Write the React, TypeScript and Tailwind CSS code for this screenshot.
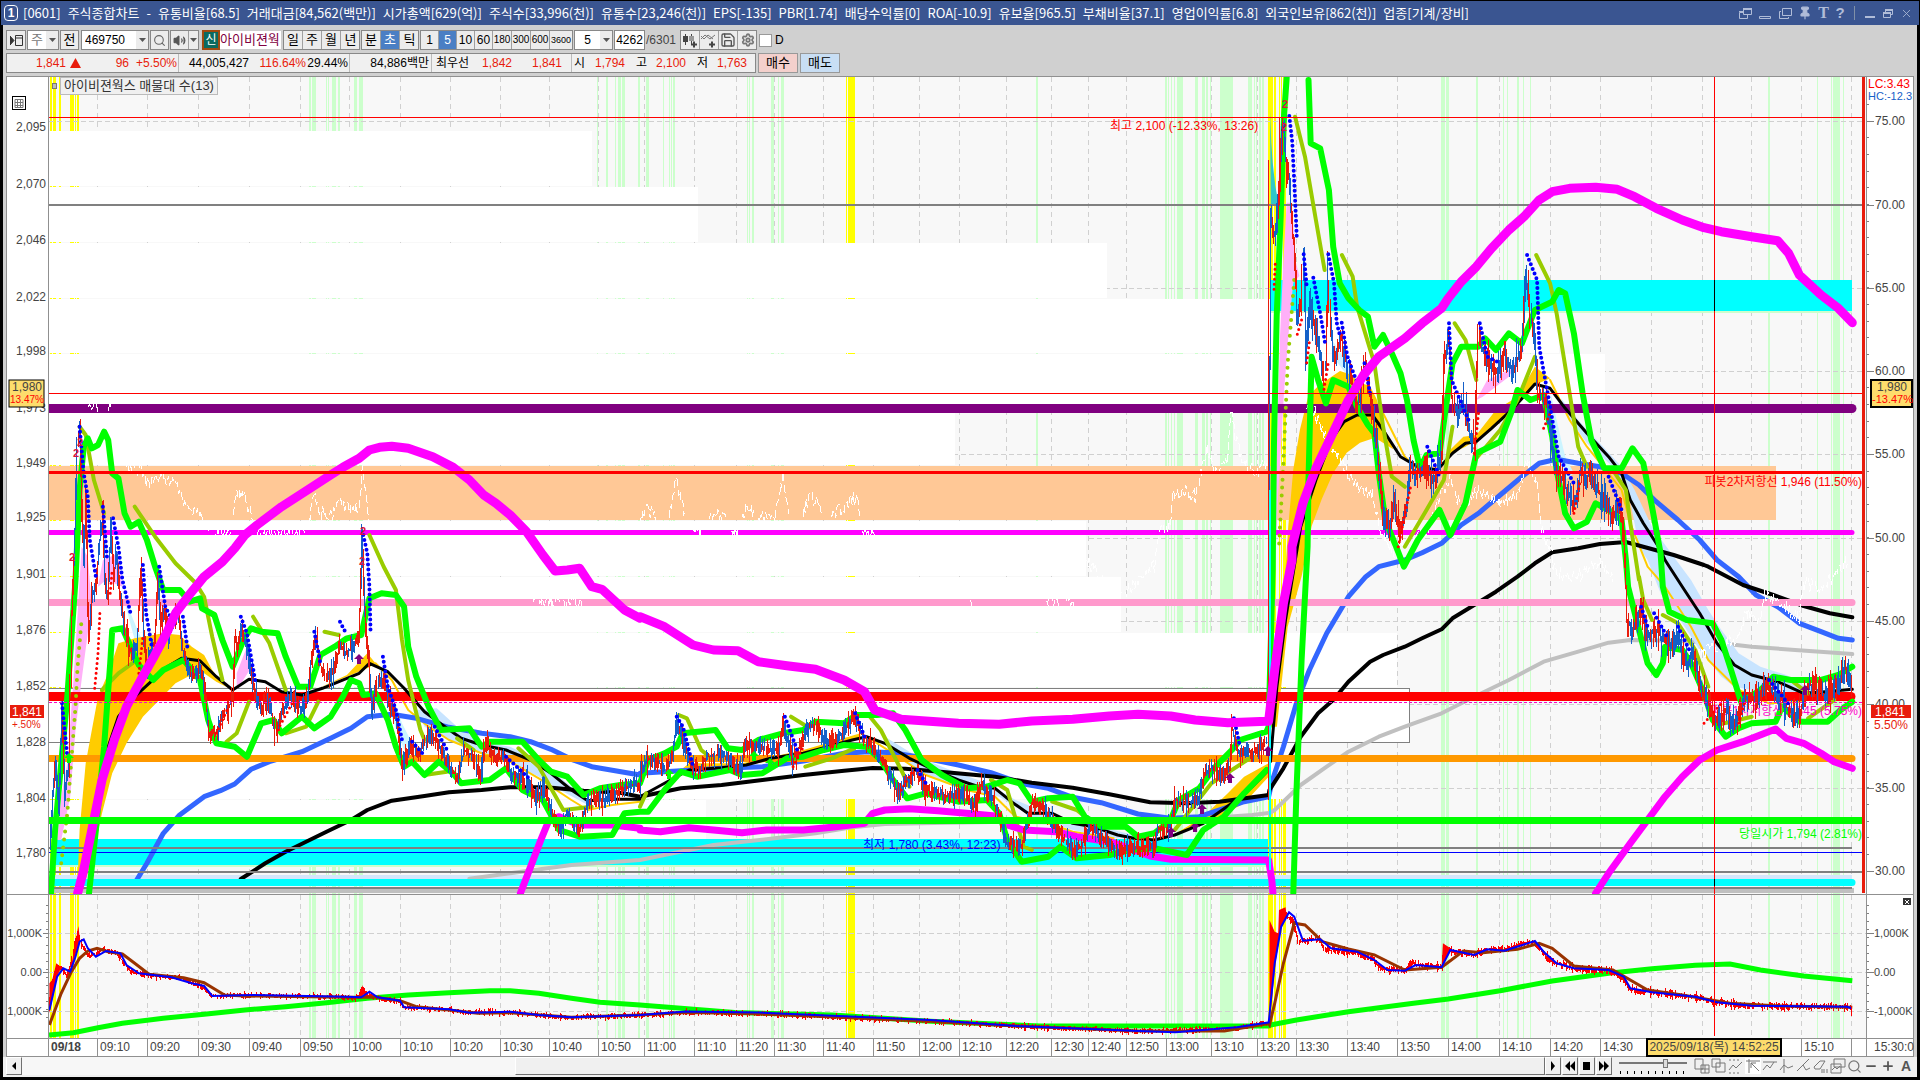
import React from "react";
import { Search, Volume2, Save, Settings, Minus, Plus, Pin, X } from "lucide-react";

/* ---------- chart geometry ---------- */

type Pt = [number, number];

// Series are digitised per tile; each tile has its own origin and scale.
const TILES: Record<string, [number, number, number, number]> = {
  A: [0, 380, 2.45, 3],
  B: [640, 400, 2.45, 3],
  C: [1240, 80, 2.306, 3],
  D: [1240, 560, 2.306, 3],
  E: [0, 880, 2.45, 3],
  F: [1240, 880, 2.306, 3],
  G: [0, 0, 0.8167, 0.8167],
  H: [1260, 76, 3, 3],
};

function points(src: string): Pt[] {
  let tile = TILES.A;
  const out: Pt[] = [];
  for (const tok of src.trim().split(/\s+/)) {
    if (TILES[tok]) {
      tile = TILES[tok];
      continue;
    }
    const [x, y] = tok.split(",").map(Number);
    out.push([tile[0] + x / tile[2], tile[1] + y / tile[3]]);
  }
  return out;
}

// Several strokes may be joined in one string with ";"
function toPath(src: string): string {
  return src
    .split(";")
    .map((s) => "M" + points(s).map((p) => p[0].toFixed(1) + " " + p[1].toFixed(1)).join("L"))
    .join("");
}

function random(seed: number) {
  let s = seed;
  return () => {
    s = (s * 16807) % 2147483647;
    return s / 2147483647;
  };
}

// High-low bars along a price line. Now and then a bar gets a long wick.
function candles(src: string, amp: number, seed: number) {
  const rnd = random(seed);
  let red = "";
  let blue = "";
  let up = true;
  const pts = points(src);
  for (let i = 1; i < pts.length; i++) {
    const [x0, y0] = pts[i - 1];
    const [x1, y1] = pts[i];
    const n = Math.max(1, Math.round(x1 - x0));
    for (let k = 0; k < n; k++) {
      const t = k / n;
      const t2 = (k + 1) / n;
      const ya = y0 + (y1 - y0) * t;
      const yb = y0 + (y1 - y0) * t2;
      const x = Math.round(x0 + (x1 - x0) * t) + 0.5;
      const wick = rnd() > 0.8 ? 1.5 : 1;
      const top = Math.min(ya, yb) - rnd() * amp * wick;
      const bottom = Math.max(ya, yb) + rnd() * amp * wick;
      const mid = top + (bottom - top) * rnd();
      if (rnd() > 0.6) up = !up;
      if (up) {
        red += `M${x} ${top.toFixed(1)}V${bottom.toFixed(1)}`;
      } else {
        blue += `M${x} ${top.toFixed(1)}V${mid.toFixed(1)}`;
        blue += `M${x} ${mid.toFixed(1)}V${bottom.toFixed(1)}`;
      }
    }
  }
  return { red, blue };
}

function jagged(src: string, amp: number, seed: number) {
  const rnd = random(seed);
  return src
    .split(";")
    .map((s) => {
      const pts = points(s);
      let d = `M${pts[0][0].toFixed(1)} ${pts[0][1].toFixed(1)}`;
      for (let i = 1; i < pts.length; i++) {
        const [x0, y0] = pts[i - 1];
        const [x1, y1] = pts[i];
        const n = Math.max(1, Math.round(x1 - x0));
        for (let k = 1; k <= n; k++) {
          const t = k / n;
          d += `L${(x0 + (x1 - x0) * t).toFixed(1)} ${(y0 + (y1 - y0) * t + (rnd() - 0.5) * amp).toFixed(1)}`;
        }
      }
      return d;
    })
    .join("");
}

const GREEN_BANDS: Pt[] = [
  [309, 2], [312, 4], [326, 1], [328, 1], [332, 4], [338, 2], [354, 3], [359, 4], [597, 1], [606, 2], [615, 1],
  [618, 3], [622, 3], [638, 2], [646, 3], [663, 1], [669, 1], [671, 1], [673, 2], [747, 1], [749, 1], [752, 2],
  [771, 3], [778, 1], [781, 3], [1036, 2], [1165, 2], [1168, 1], [1171, 1], [1174, 1], [1177, 6], [1195, 3],
  [1202, 3], [1206, 2], [1210, 1], [1220, 13], [1248, 4], [1254, 1], [1256, 1], [1259, 2], [1262, 2], [1441, 4],
  [1446, 3], [1476, 2], [1503, 1], [1507, 1], [1517, 2], [1523, 1], [1530, 1], [1768, 2], [1817, 1], [1831, 1],
  [1833, 7], [1843, 1],
];
const YELLOW_BANDS: Pt[] = [
  [50, 2], [53, 3], [59, 2], [70, 4], [75, 1], [77, 2], [846, 1], [848, 7], [1268, 5], [1274, 2], [1279, 1],
  [1281, 1], [1283, 3],
];
const GRID_X = [
  97, 147, 198, 249, 300, 349, 400, 450, 500, 549, 598, 644, 694, 736, 774, 823, 873, 919, 959, 1006, 1051, 1088,
  1126, 1166, 1211, 1257, 1296, 1347, 1397, 1448, 1499, 1550, 1600, 1651, 1702, 1751, 1801, 1851,
];
const GRID_Y = [121, 205, 288, 371, 454, 538, 621, 704, 788, 871];
const PROFILE: [number, number, number][] = [
  [131, 55, 592], [187, 55, 698], [243, 55, 1107], [299, 54, 1559], [354, 54, 1605], [409, 56, 955],
  [521, 55, 1086], [577, 55, 1121], [633, 54, 1397], [688, 54, 1410], [743, 56, 1290], [800, 39, 706],
];

const PRICE_LEFT =
  "A 122,1400 130,1250 138,1150 145,1300 152,980 160,1250 170,1150 176,700 184,450 190,200 195,140 200,380 205,540 210,350 214,600 218,780 225,650 235,620 245,480 252,400 258,600 265,650 272,430 280,600 285,520 295,640 305,720 315,810 325,820 335,800 345,570 352,760 360,870 372,800 380,790 388,590 395,740 405,700 415,760 425,730 436,700 445,800 455,850 465,880 480,880 495,870 505,950 512,1060 530,1060 545,1020 560,980 570,960 575,780 583,790 590,740 600,780 612,850 625,930 640,980 660,960 675,1050 690,1000 710,950 740,990 755,940 765,820 775,770 785,850 800,900 820,870 833,790 845,820 865,800 880,770 885,600 888,460 895,700 905,850 912,1000 925,900 940,900 955,960 975,1040 988,1170 1005,1090 1030,1120 1050,1060 1070,1080 1090,1140 1120,1190 1140,1110 1160,1130 1175,1190 1190,1090 1215,1140 1235,1130 1255,1180 1290,1200 1310,1260 1330,1220 1350,1290 1372,1350 1390,1300 1420,1350 1440,1260 1480,1260 1520,1230 1568,1210 B 0,1120 20,1080 40,1080 60,1100 78,1080 90,960 105,1020 120,1080 145,1110 165,1070 200,1060 225,1090 250,1110 255,1040 290,1040 340,1050 350,970 375,1080 400,1020 415,970 440,1000 465,1030 500,995 525,950 545,1000 570,1040 600,1100 635,1180 660,1130 680,1120 700,1170 750,1185 800,1185 820,1220 838,1150 860,1190 880,1240 900,1330 935,1340 960,1210 985,1220 1005,1250 1030,1300 1060,1350 1080,1340 1105,1280 1130,1310 1160,1350 1200,1345 1260,1340 1270,1290 1300,1280 1310,1200 1350,1210 1370,1190 1385,1120 1405,1100 1425,1135 1445,1100 1450,980 1465,1060 1500,1055 1520,1050 1535,1020";
const PRICE_RIGHT =
  "H 28,1300 33,420 40,480 48,460 56,360 62,210 72,150 78,250 88,300 96,440 104,540 112,740 124,680 131,550 138,820 150,680 158,740 175,780 190,900 197,860 202,560 212,760 222,850 244,780 C 255,900 270,980 280,950 288,860 300,930 315,1100 330,1300 345,1350 355,1250 368,1370 380,1300 395,1160 410,1180 430,1160 450,1200 465,1120 470,850 482,760 490,950 500,1000 515,970 530,1060 542,1100 550,760 565,830 590,880 610,820 630,880 650,800 660,580 670,700 680,780 688,950 705,960 715,1050 725,1150 745,1200 770,1280 785,1180 810,1190 830,1240 860,1310 878,1280 888,1430 D 893,180 905,210 925,160 940,230 960,210 990,260 1010,220 1030,310 1045,270 1065,400 1080,430 1100,480 1120,450 1145,490 1165,410 1190,410 1215,370 1240,400 1265,450 1290,470 1310,370 1330,390 1355,410 1380,370 1395,320 1410,370";

const S = {
  bigMagenta:
    "A 190,1540 205,1470 225,1350 250,1200 280,1080 310,980 345,900 375,835 410,755 430,700 460,650 500,590 545,545 575,505 600,465 630,435 690,380 760,325 810,285 840,262 880,235 905,210 930,202 960,199 1000,205 1060,230 1110,262 1150,300 1185,345 1215,370 1250,405 1290,455 1330,525 1360,573 1390,570 1420,565 1450,620 1475,628 1530,690 1568,715 B 0,650 60,680 130,735 180,750 240,752 290,785 360,797 430,808 500,840 550,875 575,930 640,958 700,963 780,970 880,973 960,963 1060,958 1150,948 1220,943 1300,948 1360,960 1440,968 1535,964 D 66,484 80,330 100,130 120,0 C 120,1400 145,1270 175,1165 210,1070 250,960 285,885 320,830 380,775 420,730 465,685 480,655 510,605 545,560 580,505 620,450 655,410 690,360 720,335 760,325 820,322 870,328 910,350 960,385 1020,420 1070,443 1110,455 1180,470 1240,482 1265,520 1290,585 1340,645 1380,685 1412,728",
  lowMagenta:
    "A 1275,1540 1300,1460 1325,1380 1345,1320 1370,1310 1420,1335 1500,1335 1568,1345 B 0,1290 50,1295 120,1283 180,1290 250,1298 310,1290 400,1290 470,1282 550,1270 570,1240 600,1230 660,1226 730,1232 800,1240 870,1248 900,1275 940,1290 1020,1295 1070,1310 1150,1325 1200,1345 1250,1368 1300,1378 1540,1380 1548,1440 1552,1500; D 820,1000 850,940 900,850 940,780 980,710 1020,650 1060,600 1100,570 1160,545 1210,520 1235,507 1260,535 1300,550 1340,580 1370,605 1412,625",
  blue:
    "A 335,1500 360,1450 400,1360 440,1305 500,1250 540,1232 575,1212 615,1168 660,1145 740,1115 810,1075 860,1045 900,1010 960,1003 1020,1015 1100,1042 1180,1060 1250,1070 1300,1085 1350,1108 1400,1138 1450,1160 1568,1185 B 0,1120 100,1112 200,1105 300,1100 400,1083 500,1060 560,1055 620,1058 700,1075 780,1095 860,1118 940,1152 1000,1165 1060,1192 1130,1208 1220,1242 1300,1255 1370,1250 1420,1230 1480,1205 1540,1190 D 75,660 100,560 130,430 160,330 200,220 250,110 290,50 320,20 380,0 C 420,1418 465,1390 510,1335 550,1300 600,1245 650,1190 690,1150 730,1138 780,1150 830,1160 880,1180 920,1215 960,1265 1010,1320 1060,1380 1100,1440 D 1150,50 1190,105 1240,140 1290,190 1340,215 1380,235 1412,240",
  black:
    "A 590,1497 650,1450 700,1415 750,1385 800,1355 860,1320 900,1290 960,1262 1040,1248 1100,1237 1180,1230 1250,1222 1340,1222 1430,1232 1520,1238 B 0,1190 100,1165 200,1155 300,1140 400,1125 500,1112 570,1104 650,1106 750,1117 870,1130 960,1148 1060,1163 1150,1183 1250,1207 1340,1210 1420,1205 1540,1185 D 68,690 100,625 140,530 180,460 215,420 250,365 300,305 330,285 380,260 420,235 465,208 490,175 540,135 590,95 640,50 C 680,1450 720,1417 780,1405 830,1392 890,1386 930,1400 1000,1425 1070,1455 D 1080,20 1160,75 1230,105 1300,138 1360,160 1412,172",
  gray:
    "A 1150,1496 1250,1480 1400,1455 1568,1440 B 0,1380 80,1360 180,1335 330,1315 430,1300 520,1282 600,1272 750,1268 900,1265 1100,1270 1300,1262 1500,1245 1545,1238 D 80,750 140,675 200,620 250,575 320,530 380,500 465,460 540,410 620,360 700,305 780,275 850,248 900,240 1000,242 1100,248 1180,260 1280,270 1412,282",
  thinBlack:
    "A 225,1350 240,1240 265,1100 290,1010 330,950 370,905 410,860 445,835 490,842 530,890 570,930 610,898 650,905 690,935 740,945 790,925 850,895 880,880 905,850 950,875 990,925 1040,995 1090,1040 1130,1075 1180,1095 1240,1110 1300,1140 1350,1180 1400,1230 1440,1262 1500,1258 1568,1258 B 0,1190 60,1150 120,1110 200,1103 260,1095 320,1075 400,1060 460,1040 520,1020 555,1010 600,1030 660,1075 720,1110 780,1140 830,1160 870,1165 910,1205 950,1240 1010,1240 1060,1270 1110,1280 1170,1305 1210,1315 1260,1320 1310,1305 1380,1270 1450,1210 1500,1160 1540,1110; D 70,605 85,380 105,180 125,20 C 140,1340 175,1200 210,1080 240,1025 270,1005 305,1005 330,1050 370,1130 410,1160 455,1170 490,1120 520,1090 545,1085 580,1045 630,985 680,912 715,925 750,985 800,1060 850,1130 880,1180 900,1260 930,1330 970,1410 D 980,0 1020,80 1060,160 1100,250 1140,315 1180,345 1240,365 1300,400 1350,395 1412,388",
  upGreen:
    "A 125,1540 135,1350 150,1150 165,950 185,600 195,330 205,200 215,175 225,205 240,195 255,155 265,180 275,280 290,295 305,400 320,440 340,425 360,480 380,560 400,630 440,630 465,665 490,655 495,685 525,705 545,780 570,860 600,770 615,745 640,755 680,760 700,830 730,920 760,920 785,825 820,800 850,775 885,765 905,655 935,640 970,645 990,680 1000,800 1020,890 1050,980 1080,1050 1150,1045 1180,1100 1200,1085 1280,1085 1320,1140 1350,1175 1390,1190 1430,1245 1470,1225 1520,1215 1568,1210 B 20,1080 60,1060 90,1040 105,1000 185,990 215,1045 250,1050 290,1020 350,1000 400,990 430,965 500,970 530,945 580,945 620,940 650,990 690,1080 740,1125 800,1165 850,1160 900,1140 930,1150 960,1205 1000,1195 1060,1190 1090,1250 1130,1280 1190,1280 1220,1310 1260,1300 1300,1260 1320,1200 1370,1165 1410,1100 1450,1050 1470,1020 1535,995 D 66,500 H 38,1480 42,1100 50,720 62,420 72,120 80,5; C 158,0 163,190 185,205 205,330 215,500 230,610 250,655 275,690 295,710 310,800 330,765 350,820 370,880 385,960 400,1080 415,1165 430,1125 460,1120 475,980 490,850 510,800 550,800 565,775 590,810 620,760 650,790 680,690 720,665 735,630 750,640 770,760 790,940 810,1080 840,1165 880,1165 905,1105 930,1150 950,1280 970,1420 D 975,80 990,155 1030,180 1090,190 1110,240 1130,320 1155,425 1200,390 1230,350 1270,360 1340,360 1380,345 1412,320",
  lowGreen:
    "A 218,1540 235,1350 255,1100 270,850 275,750 300,745 340,855 375,900 400,870 450,840 490,900 510,1020 530,1090 575,1100 605,1130 640,1030 670,1020 690,1060 740,1010 770,1045 810,1010 840,950 860,900 880,910 890,945 920,940 950,1020 970,1100 990,1160 1010,1145 1040,1185 1075,1145 1110,1180 1130,1210 1200,1200 1240,1165 1280,1230 1330,1260 1370,1350 1420,1370 1500,1365 1530,1300 B 0,1235 20,1235 60,1170 100,1115 140,1130 220,1110 250,1125 300,1120 360,1075 400,1070 450,1050 500,1035 555,1040 590,1080 620,1140 655,1195 700,1180 780,1205 850,1200 880,1240 900,1320 935,1385 1000,1370 1030,1340 1070,1375 1150,1365 1200,1350 1260,1345 1340,1365 1380,1290 1430,1250 1480,1180 1535,1110; D 123,1000 130,700 142,300 C 156,1400 158,1200 165,830 180,900 198,970 215,900 250,920 270,980 295,1035 310,1060 320,1180 335,1320 360,1400 378,1460 410,1380 460,1290 485,1365 520,1270 545,1120 600,1085 625,1000 640,930 670,960 700,945 720,1070 730,1170 750,1300 770,1345 800,1325 820,1270 850,1290 880,1320 890,1440 D 895,80 920,210 940,310 960,345 975,310 980,260 1020,270 1040,310 1070,400 1090,480 1120,530 1150,505 1180,490 1235,485 1250,440 1290,485 1355,485 1385,450 1412,425",
  olive:
    "A 195,140 210,165 230,300 255,400; A 330,380 380,470 430,550 480,610 500,650 520,770 545,900; A 620,710 660,790 700,930; A 905,465 940,560 970,630 985,780 1000,900 1030,1050 1040,1080; A 250,930 290,880 330,845; A 795,755 830,765; A 555,1085 580,1060 610,965; A 700,1060 750,1040 780,965; A 1040,1185 1095,1175; A 1120,1075 1160,1110; A 1270,1105 1320,1160 1380,1290 1450,1280; B 95,945 115,955 150,1050 175,1075; B 0,1220 15,1180; B 370,950 410,980; B 405,1100 470,1075 525,1045; B 560,945 590,990 640,1110 660,1160; B 860,1140 900,1170 940,1340 960,1350; B 1010,1205 1070,1230 1100,1260; B 1310,1290 1400,1150 1500,1070; C 127,110 150,230 175,420 195,570; C 235,525 260,590 270,680 310,850 330,1040 350,1190 380,1220; C 495,730 520,780 545,900; C 683,525 715,610 730,700 760,940 780,1100 800,1160; C 380,1400 430,1290 470,1200 490,1040; C 545,1135 600,1050 640,960 680,830; C 860,1170 890,1230 900,1330 920,1500; D 920,50 930,120 950,180; D 975,165 1010,190 1050,270 1080,380; D 1100,495 1180,470; D 1270,360 1310,400; D 1310,475 1370,420",
  oliveDots: "C 125,600 110,850 100,1150 90,1400; A 150,1450 165,1300 185,980 190,860 200,720",
  blueDots:
    "A 195,140 205,280 215,350 220,480 235,590; A 252,380 262,530; A 277,415 290,500 300,600 320,700; A 350,555 358,700 372,800; A 390,560 405,680 430,740; A 448,710 460,810; A 590,710 605,760 625,900; A 770,755 785,850; A 833,725 850,765; A 890,465 900,520 905,620 908,760; A 938,830 950,920 970,990 985,1080; A 152,970 165,1130; A 1010,1085 1035,1120; A 1065,1040 1095,1110; A 1240,1130 1300,1200; B 90,950 105,980 130,1100; B 355,950 385,1050; B 527,940 550,1010; B 680,1110 705,1160; B 1455,955 1470,1040; H 88,120 97,200 103,320 108,430 110,480; H 131,535 140,630; H 160,605 182,720 195,800; H 205,535 222,620 230,740 240,780; H 245,740 262,840 280,890 292,920; C 287,850 300,940; C 432,1100 460,1190; C 482,730 488,900 530,1030; C 553,730 570,830 600,850; C 662,525 685,600 690,800 715,980 735,1130 770,1210; C 850,1190 880,1290; D 925,140 940,200; D 955,160 985,230; D 1010,200 1040,280; D 1220,360 1270,440",
  redDots:
    "A 232,925 240,820 245,690; A 340,880 350,770; A 530,1060 560,980; A 680,1050 720,960; A 270,640 275,570; B 640,1170 670,1110; B 375,1100 400,1040; C 365,1400 395,1210; H 192,940 205,860; H 112,775 128,720; H 42,640 46,560; H 140,860 148,800; C 770,1300 785,1200; C 540,1120 550,1000; C 700,1045 715,1000; D 1070,490 1110,430; D 1150,490 1165,420",
  white:
    "A 310,262 345,270 360,310 400,290 430,310 460,385 490,390 497,415; A 572,405 578,340 600,350 620,415; A 757,415 770,350 785,400 815,410 825,370 860,380 880,380 888,260 900,380 905,430; B 0,355 20,330 40,355; B 72,355 88,230 110,350; B 170,358 195,348 210,356; B 250,350 260,320 280,340; B 290,355 330,350 350,230 365,350; B 400,350 412,290 435,310 445,350; B 470,350 520,295 535,300 540,355; B 1095,480 1130,540 1190,575 1220,540 1260,500 1270,400 1300,380 1305,290 1330,270 1360,290 1375,210 1390,150 1410,220 1440,180 1448,20 1460,120 1480,190 1510,220 1535,190; H 140,1000 165,1010 190,1070 225,1130 255,1180 290,1230 340,1260 360,1360 400,1430 C 430,1350 465,1240 485,1200 510,1290 550,1230 600,1270 640,1240 660,1150 685,1200 695,1350 720,1420 D 720,20 760,60 830,10 860,50; D 1040,290 1100,260 1150,230 1165,160 1200,180 1210,100 1290,170 1300,70 1350,80 1400,0; A 215,75 220,90 235,70 240,92; A 265,92 272,70; A 505,450 512,465 545,455 565,465; A 630,455 660,462 700,455 750,460; B 130,392 150,400; B 225,392 240,400; B 545,392 575,400; A 1305,665 1315,660 1340,670 1375,660 1385,672 1425,660; B 810,600 815,612; B 995,605 1025,600; B 1045,602 1065,606",
  subGreen:
    "E 120,465 180,458 240,443 300,430 400,415 500,403 600,390 700,380 800,368 900,355 1000,345 1100,338 1200,332 1250,332 1320,340 1400,355 1470,367 1568,375 G 600,827 680,829 760,834 850,838 950,838 1036,838 F 70,435 130,420 250,395 400,370 480,357 600,332 720,303 850,280 950,266 1050,256 1130,252 1200,270 1300,288 1412,302",
  subBrown:
    "E 121,435 150,340 175,275 195,235 215,213 238,205 265,215 300,222 330,250 365,283 450,293 500,308 550,345 600,348 850,352 920,352 980,362 1020,380 1100,390 1170,400 1250,398 1400,412 1568,405 G 560,827 620,828 690,831 760,834 830,838 930,842 1000,842 1036,836 F 68,435 80,370 100,250 125,130 150,135 190,185 250,207 310,225 380,270 465,262 515,213 560,218 640,208 690,190 720,205 770,258 860,270 940,330 1020,345 1130,370 1250,378 1412,382",
  subBlue:
    "E 121,390 140,290 155,265 172,275 185,230 195,185 205,178 215,205 235,230 260,213 295,220 310,255 340,280 420,292 470,310 500,318 520,348 620,345 850,350 885,352 905,335 925,352 980,362 990,382 1100,388 1150,398 1250,395 1320,405 1400,412 1568,405 G 560,826 620,827 690,830 760,833 830,838 930,842 960,843 1010,839 1036,835 F 66,430 80,250 95,140 113,97 125,110 145,182 185,178 210,205 270,215 310,240 340,270 380,272 405,255 465,262 485,210 540,225 570,208 610,212 680,183 700,215 730,250 770,265 850,270 885,290 900,325 950,337 1050,350 1100,367 1180,377 1400,380 1410,385",
};

const SUB_RED =
  "E 121,390 126,320 138,265 150,262 165,290 175,250 183,190 192,160 200,195 215,225 235,225 250,208 285,218 300,240 320,275 360,286 440,293 480,312 500,325 520,348 620,346 880,352 887,325 900,345 925,354 980,364 990,382 1100,388 1150,398 1250,396 1320,406 1400,412 1568,405 G 560,827 620,828 690,831 760,834 830,838 930,842 1010,840 1036,835";
const SUB_RED_R =
  "F 105,100 125,130 135,185 150,182 185,178 195,208 270,218 310,240 325,268 380,270 395,250 465,262 470,210 540,225 570,208 610,208 650,190 680,185 700,220 720,245 770,265 850,270 885,300 900,328 950,337 1050,350 1100,367 1180,377 1408,381";

const CLOUDS: [string, string][] = [
  ["#c8e4ff", "A 1020,990 1070,985 1120,1040 1180,1085 1250,1100 1300,1130 1360,1180 1430,1250 1440,1275 1380,1235 1320,1190 1240,1140 1180,1120 1100,1080 1040,1040"],
  ["#c8e4ff", "B 600,1010 680,1070 760,1110 850,1150 920,1200 980,1230 1060,1260 1160,1290 1240,1315 1160,1315 1060,1290 960,1250 880,1190 800,1170 700,1125 620,1060"],
  ["#c8e4ff", "C 740,955 780,1020 830,1090 880,1160 910,1230 950,1340 1000,1430 D 1040,60 1080,150 1110,210 1150,280 1200,320 1260,345 1300,375 1350,385 1300,405 1240,390 1180,390 1140,380 1110,350 1060,270 1020,190 970,100 940,0 C 920,1400 895,1230 860,1160 800,1090 750,1000"],
  ["#ccf4ff", "C 715,930 730,1020 750,1130 770,1180 750,1200 725,1100; A 925,850 950,900 985,1030 1010,1090 990,1110 950,980; H 215,790 260,860 290,920 270,910 225,850; A 300,640 340,760 360,800 330,780"],
  ["#ffb0f8", "A 140,1380 150,1250 165,1150 180,900 190,700 200,500 215,530 225,680 215,760 200,900 185,1050 172,1250 150,1380"],
  ["#ffb0f8", "H 48,1200 60,780 70,560 80,380 95,380 108,560 118,600 100,620 90,720 72,950 55,1250 44,1500 38,1500"],
  ["#ffb0f8", "A 580,880 605,800 612,870 580,930; C 545,960 570,900 620,870 660,800 620,890 560,950; A 240,620 252,540 290,520 300,620 260,600"],
  ["#ffcc00", "A 190,1500 195,1350 210,1150 240,950 265,880 290,790 330,775 400,760 440,765 470,800 500,825 520,870 545,910 570,930 530,905 500,880 460,890 430,910 390,960 350,1010 310,1090 275,1180 250,1300 225,1440 205,1520"],
  ["#ffcc00", "A 780,925 850,885 900,820 920,850 905,862 860,885"],
  ["#ffcc00", "D 72,500 85,250 H 75,1500 85,1350 100,1180 120,1060 145,960 175,930 210,905 240,885 270,895 300,920 330,930 350,970 375,1060 400,1120 345,1085 300,1100 260,1130 220,1190 185,1270 155,1350 125,1500 D 110,200 85,500"],
  ["#ffcc00", "C 480,1115 515,1070 545,1065 590,990 640,950 680,860 715,895 680,915 630,990 580,1050 520,1100 480,1125"],
  ["#ffcc00", "B 1300,1310 1380,1250 1440,1180 1480,1130 1540,1090 1540,1130 1480,1210 1420,1250 1340,1290"],
  ["#ffcc00", "B 60,1150 120,1090 250,1090 400,1050 540,1000 540,1015 400,1065 250,1098 120,1110"],
];

const YELLOW_LINES =
  "A 920,850 960,900 1000,990 1050,1040 1100,1080 1180,1120 1250,1145 1320,1195 1400,1260 1440,1290 1500,1275 1568,1265; B 555,1010 620,1060 700,1125 800,1170 870,1190 920,1250 1000,1270 1060,1295 1160,1315; C 330,1000 380,1130 420,1180; C 715,900 760,1020 800,1100 850,1180 880,1230 900,1330 940,1460 D 980,80 1040,200 1080,300 1150,390 1220,430 1300,425";

const ROUND = { fill: "none", strokeLinejoin: "round" as const, strokeLinecap: "round" as const };

function Bands({ y, h }: { y: number; h: number }) {
  return (
    <g shapeRendering="crispEdges">
      {GRID_X.map((x) => (
        <path key={x} d={`M${x + 0.5} ${y}v${h}`} stroke="#d0d0d0" strokeDasharray="5 4" />
      ))}
      {GREEN_BANDS.map(([x, w]) => (
        <rect key={x} x={x} y={y} width={w} height={h} fill="#ccffcc" />
      ))}
      {YELLOW_BANDS.map(([x, w]) => (
        <rect key={x} x={x} y={y} width={w} height={h} fill="#ffff00" />
      ))}
    </g>
  );
}

function HLine({ y, w, c, x1 = 49, x2 = 1862, dash }: { y: number; w: number; c: string; x1?: number; x2?: number; dash?: string }) {
  return <path d={`M${x1} ${y}H${x2}`} stroke={c} strokeWidth={w} strokeDasharray={dash} />;
}

function Arrow({ x, y, c }: { x: number; y: number; c: string }) {
  return <path d={`M${x} ${y}l5 5h-3v5h-4v-5h-3z`} fill={c} />;
}

const CHART_FONT = "'Liberation Sans', 'Noto Sans CJK KR', sans-serif";

function MainPlot() {
  const a = candles(PRICE_LEFT, 11, 7);
  const b = candles(PRICE_RIGHT, 16, 11);
  return (
    <svg viewBox="49 77 1817 817" preserveAspectRatio="none" className="block h-full w-full bg-[#f8f8f8]">
      <Bands y={77} h={817} />
      <g shapeRendering="crispEdges">
        {GRID_Y.map((y) => (
          <HLine key={y} y={y + 0.5} w={1} c="#d0d0d0" dash="5 3" />
        ))}
        {PROFILE.map(([y, h, x]) => (
          <rect key={y} x={49} y={y} width={x - 49} height={h} fill="#ffffff" />
        ))}
        <rect x={49} y={466} width={1727} height={54} fill="#ffc896" />
        <path d="M49 688.5H1409.5V742.5H49" fill="none" stroke="#808080" />
        <rect x={53} y={839} width={1215} height={26} fill="#00ffff" />
        <rect x={53} y={865} width={1215} height={2} fill="#ccffcc" />
        <rect x={49} y={875} width={1803} height={4} fill="#d4e6fb" />
        <rect x={1271} y={280} width={581} height={31} fill="#00ffff" />
        <rect x={1271} y={311} width={581} height={2} fill="#ccffcc" />
      </g>
      <path d={toPath(S.gray)} {...ROUND} stroke="#c0c0c0" strokeWidth={4} />
      <path d={toPath("H 30,100 34,200 38,260 46,330 56,385 32,385")} fill="#30c8c8" />
      {CLOUDS.map(([c, d], i) => (
        <path key={i} d={toPath(d)} fill={c} />
      ))}
      <path d={toPath(YELLOW_LINES)} {...ROUND} stroke="#ffcc00" strokeWidth={2} />
      <path d={toPath(S.blue)} {...ROUND} stroke="#3366ff" strokeWidth={5} />
      <path d={toPath(S.black)} {...ROUND} stroke="#000000" strokeWidth={4} />
      <g shapeRendering="crispEdges">
        <HLine y={204.5} w={2} c="#808080" />
        <HLine y={871.5} w={2} c="#808080" />
        <HLine y={848} w={2} c="#808080" x2={1852} />
        <HLine y={852.5} w={1} c="#0000ff" />
        <rect x={49} y={888} width={1805} height={5} fill="#c0c0c0" />
        <HLine y={887.5} w={2} c="#808080" x2={1852} />
      </g>
      <g strokeLinecap="round">
        <HLine y={408.5} w={9} c="#800080" x2={1852} />
        <HLine y={532.5} w={5} c="#ff00ff" x2={1852} />
        <HLine y={602.5} w={7} c="#ff99cc" x2={1852} />
        <HLine y={696.5} w={9} c="#ff0000" x2={1851} />
        <HLine y={758.5} w={7} c="#ff9900" x2={1852} />
        <HLine y={882.5} w={7} c="#00ffff" x2={1852} />
      </g>
      <path d={jagged(S.white, 14, 5)} fill="none" stroke="#ffffff" strokeWidth={1} shapeRendering="crispEdges" strokeDasharray="8 4" />
      <path d={toPath(S.thinBlack)} {...ROUND} stroke="#000000" strokeWidth={3} />
      <path d={toPath(S.olive)} {...ROUND} stroke="#99cc00" strokeWidth={4} />
      <path d={toPath(S.oliveDots)} {...ROUND} stroke="#99cc00" strokeWidth={4} strokeDasharray="0 8" />
      <path d={toPath(S.lowMagenta)} {...ROUND} stroke="#ff00ff" strokeWidth={7} />
      <path d={toPath(S.lowGreen)} {...ROUND} stroke="#00ff00" strokeWidth={6} />
      <path d={toPath(S.upGreen)} {...ROUND} stroke="#00ff00" strokeWidth={6} />
      <text x={1862} y={715} fill="#ff00c8" textAnchor="end" fontSize={12} fontFamily={CHART_FONT}>피봇1차저항선 1,845 (5.75%)</text>
      <g shapeRendering="crispEdges" fill="none" strokeWidth={1}>
        <path d={a.red + b.red} stroke="#e81c0c" />
        <path d={a.blue + b.blue} stroke="#1560c8" />
        <path d="M1268.5 160V800" stroke="#e81c0c" />
        <path d="M1270 490V870" stroke="#00ffff" strokeWidth={2} />
        <path d="M1279.5 118V205" stroke="#e81c0c" />
      </g>
      <path d={toPath(S.redDots)} {...ROUND} stroke="#ff0000" strokeWidth={3} strokeDasharray="0 5" />
      <path d={toPath(S.blueDots)} {...ROUND} stroke="#0000ff" strokeWidth={4} strokeDasharray="0 5" />
      <path d={toPath(S.bigMagenta)} {...ROUND} stroke="#ff00ff" strokeWidth={9} />
      <Arrow x={359} y={654} c="#800080" />
      <Arrow x={1171} y={827} c="#800080" />
      <Arrow x={1195} y={822} c="#800080" />
      <Arrow x={1202} y={804} c="#800080" />
      <Arrow x={1230} y={773} c="#800080" />
      <Arrow x={1268} y={746} c="#800080" />
      <Arrow x={1805} y={685} c="#800080" />
      <Arrow x={754} y={751} c="#00ff00" />
      <Arrow x={770} y={758} c="#00ff00" />
      <Arrow x={669} y={769} c="#00ff00" />
      <Arrow x={69} y={753} c="#00ff00" />
      <g shapeRendering="crispEdges">
        <HLine y={117.5} w={1} c="#ff0000" />
        <HLine y={472.5} w={3} c="#ff0000" />
        <HLine y={702.5} w={1} c="#ff00c8" dash="3 2" />
        <HLine y={820.5} w={7} c="#00ff00" />
        <HLine y={393.5} w={1} c="#ff0000" />
        <path d="M1714.5 77V894" stroke="#ff0000" />
        <path d="M1714.5 280V311M1714.5 879V886" stroke="#000000" />
        <rect x={1862} y={77} width={3} height={816} fill="#e81c0c" />
      </g>
      <g fontSize={12} fontFamily={CHART_FONT}>
        <text x={1110} y={130} fill="#ff0000">최고 2,100 (-12.33%, 13:26)</text>
        <text x={863} y={849} fill="#0000ff">최저 1,780 (3.43%, 12:23)</text>
        <text x={1862} y={486} fill="#ff0000" textAnchor="end">피봇2차저항선 1,946 (11.50%)</text>
        <text x={1862} y={838} fill="#00ff00" textAnchor="end">당일시가 1,794 (2.81%)</text>
        <g fill="#dc143c" fontWeight="bold" fontSize={11}>
          <text x={1282} y={108}>2</text>
          <text x={1281} y={131}>2</text>
          <text x={360} y={535}>2</text>
          <text x={359} y={565}>2</text>
          <text x={77} y={446}>2</text>
          <text x={73} y={457}>2</text>
          <text x={69} y={561}>2</text>
        </g>
      </g>
    </svg>
  );
}

function SubPlot() {
  const l = candles(SUB_RED, 3, 3);
  const r = candles(SUB_RED_R, 4, 9);
  return (
    <svg viewBox="49 895 1817 143" preserveAspectRatio="none" className="block h-full w-full bg-[#f8f8f8]">
      <Bands y={895} h={143} />
      {[933, 972, 1011].map((y) => (
        <HLine key={y} y={y + 0.5} w={1} c="#d0d0d0" dash="5 3" x2={1866} />
      ))}
      <path d={toPath(S.subGreen)} fill="none" stroke="#00ff00" strokeWidth={5} />
      <path d={toPath("E 121,400 121,310 128,300 138,250 150,262 140,290; E 172,275 180,220 192,138 196,180; F 68,430 68,120 80,155 88,160 90,90 105,82 108,110 95,145 82,245; F 465,262 468,190 480,200 488,208; E 884,352 888,315 895,340")} fill="#ff0000" />
      <path d={l.red + l.blue + r.red + r.blue} stroke="#ff0000" fill="none" shapeRendering="crispEdges" />
      <path d={toPath(S.subBrown)} fill="none" stroke="#993300" strokeWidth={3} />
      <path d={toPath(S.subBlue)} fill="none" stroke="#0000ff" strokeWidth={2} />
      <path d="M1851.5 1006V1016" stroke="#ff0000" />
      <path d="M1714.5 895V1036" stroke="#ff0000" shapeRendering="crispEdges" />
    </svg>
  );
}

function LeftAxis() {
  const labels: [string, number][] = [
    ["2,095", 127], ["2,070", 184], ["2,046", 240], ["2,022", 297], ["1,998", 351], ["1,949", 463],
    ["1,925", 517], ["1,901", 574], ["1,876", 630], ["1,852", 686], ["1,828", 742], ["1,804", 798], ["1,780", 853],
  ];
  return (
    <svg viewBox="7 77 41 817" preserveAspectRatio="none" className="block h-full w-full bg-white" fontFamily={CHART_FONT} fontSize={12}>
      <rect x={12.5} y={96.5} width={13} height={13} fill="#fff" stroke="#000" />
      <path d="M15 99.500h8v8h-8zM17.500 99.500v8M20.500 99.500v8M15 102.500h8M15 105.500h8" fill="none" stroke="#777" />
      {labels.map(([t, y]) => (
        <text key={t} x={46} y={y + 4} textAnchor="end" fill="#444">{t}</text>
      ))}
      <text x={46} y={412} textAnchor="end" fill="#444">1,973</text>
      <rect x={9} y={380} width={35} height={27} fill="#fddc6c" stroke="#000" />
      <text x={12} y={391} fill="#444">1,980</text>
      <text x={10} y={403} fill="#ff0000" fontSize={10}>13.47%</text>
      <rect x={10} y={705} width={34} height={13} fill="#e81c0c" />
      <text x={12} y={716} fill="#fff">1,841</text>
      <text x={12} y={728} fill="#e81c0c" fontSize={10}>+.50%</text>
    </svg>
  );
}

function RightAxis() {
  const ticks: number[] = [];
  for (let i = 0; i < 47; i++) ticks.push(104 + i * 16.67);
  return (
    <svg viewBox="1867 77 46 817" preserveAspectRatio="none" className="block h-full w-full bg-white" fontFamily={CHART_FONT} fontSize={12}>
      {ticks.map((y) => (
        <path key={y} d={`M1867 ${Math.round(y) + 0.5}h2`} stroke="#808080" />
      ))}
      {GRID_Y.map((y, i) => (
        <g key={y}>
          <path d={`M1867 ${y + 0.5}h7`} stroke="#808080" />
          <text x={1875} y={y + 4} fill="#444">{75 - i * 5}.00</text>
        </g>
      ))}
      <text x={1868} y={88} fill="#ff0000">LC:3.43</text>
      <text x={1868} y={100} fill="#1560c8" fontSize={11}>HC:-12.3</text>
      <rect x={1871} y={380} width={41} height={27} fill="#fddc6c" stroke="#000" strokeWidth={2} />
      <text x={1877} y={391} fill="#444">1,980</text>
      <text x={1872} y={403} fill="#ff0000" fontSize={11}>-13.47%</text>
      <rect x={1871} y={705} width={40} height={13} fill="#e81c0c" />
      <text x={1875} y={716} fill="#fff">1,841</text>
      <text x={1874} y={729} fill="#e81c0c">5.50%</text>
    </svg>
  );
}

function SubAxis({ side }: { side: "left" | "right" }) {
  const left = side === "left";
  const rows: [string, number][] = [["1,000K", 933], ["0.00", 972], [left ? "1,000K" : "-1,000K", 1011]];
  const ticks: number[] = [];
  for (let i = 0; i < 15; i++) ticks.push(905 + i * 8);
  return (
    <svg viewBox={left ? "7 895 41 143" : "1867 895 46 143"} preserveAspectRatio="none" className="block h-full w-full bg-white" fontFamily={CHART_FONT} fontSize={11}>
      {ticks.map((y) => (
        <path key={y} d={left ? `M46 ${y + 0.5}h2` : `M1867 ${y + 0.5}h2`} stroke="#808080" />
      ))}
      {rows.map(([t, y]) => (
        <g key={y}>
          <path d={left ? `M43 ${y + 0.5}h5` : `M1867 ${y + 0.5}h7`} stroke="#808080" />
          <text x={left ? 42 : 1874} y={y + 4} fill="#444" textAnchor={left ? "end" : "start"}>{t}</text>
        </g>
      ))}
      {!left && <path d="M1903 898h8v7h-8z" fill="#333" />}
      {!left && <path d="M1905 900l4 4m0-4l-4 4" stroke="#fff" />}
    </svg>
  );
}

/* ---------- chrome ---------- */

// Columns 14:40 to 15:00 stay blank: the cursor's time tag lies over them.
const TIMES: [string, number][] = [
  ["09/18", 49], ["09:10", 50], ["09:20", 51], ["09:30", 51], ["09:40", 51], ["09:50", 49], ["10:00", 51],
  ["10:10", 50], ["10:20", 50], ["10:30", 49], ["10:40", 49], ["10:50", 46], ["11:00", 50], ["11:10", 42],
  ["11:20", 38], ["11:30", 49], ["11:40", 50], ["11:50", 46], ["12:00", 40], ["12:10", 47], ["12:20", 45],
  ["12:30", 37], ["12:40", 38], ["12:50", 40], ["13:00", 45], ["13:10", 46], ["13:20", 39], ["13:30", 51],
  ["13:40", 50], ["13:50", 51], ["14:00", 51], ["14:10", 51], ["14:20", 50], ["14:30", 51], ["", 51],
  ["", 49], ["", 50], ["15:10", 50], ["", 15],
];
const TIME_COLUMNS = TIMES.map(([, w]) => `minmax(0, ${w}fr)`).join(" ");

function ToolButton({ children, on, className = "w-[19px]", label }: { children: React.ReactNode; on?: boolean; className?: string; label?: string }) {
  return (
    <button
      aria-label={label}
      className={`${className} flex h-[18px] shrink-0 items-center justify-center overflow-hidden border-r border-[#a0a0a0] last:border-r-0 ${on ? "bg-[#4a7fc4] text-white" : "bg-[#ececec] text-black"}`}
    >
      {children}
    </button>
  );
}

function Group({ children, className = "" }: { children: React.ReactNode; className?: string }) {
  return <div className={`flex h-5 shrink-0 items-center overflow-hidden border border-[#888] bg-[#ececec] ${className}`}>{children}</div>;
}

function Caret() {
  return (
    <svg width="7" height="4" viewBox="0 0 7 4" fill="#555">
      <path d="M0 0h7L3.500 4z" />
    </svg>
  );
}

const TITLE = [
  "[0601]", "주식종합차트", "-", "유통비율[68.5]", "거래대금[84,562(백만)]", "시가총액[629(억)]", "주식수[33,996(천)]",
  "유통수[23,246(천)]", "EPS[-135]", "PBR[1.74]", "배당수익률[0]", "ROA[-10.9]", "유보율[965.5]", "부채비율[37.1]",
  "영업이익률[6.8]", "외국인보유[862(천)]", "업종[기계/장비]",
];

function TitleBar() {
  return (
    <header className="flex h-6 shrink-0 items-center bg-[#3a5591] pr-[6px] pl-[3px] text-white">
      <span className="flex h-4 w-[14px] items-center justify-center rounded border border-white text-[12px] font-bold">1</span>
      <h1 className="ml-[5px] flex gap-[7px] font-['Noto_Sans_CJK_KR',sans-serif] text-[13px] leading-6 whitespace-nowrap">
        {TITLE.map((t) => <span key={t}>{t}</span>)}
      </h1>
      <div className="ml-auto flex items-center gap-[6px] text-[#b0bcd8]">
        <button aria-label="분리"><svg width="14" height="13" fill="none" stroke="currentColor"><path d="M5.500 1.500h8v6h-8zM5 5.500H1.500v6h8V8M1 4.500h4" /><path d="M5 2h9" strokeWidth="2" /></svg></button>
        <button aria-label="접기"><svg width="14" height="13" fill="none" stroke="currentColor"><path d="M1.500 9.500h11v2h-11z" /></svg></button>
        <button aria-label="복사"><svg width="14" height="13" fill="none" stroke="currentColor"><path d="M4.500 1.500h9v7h-9zM3 4.500H1.500v7h9V10" /></svg></button>
        <button aria-label="고정"><Pin size={14} fill="currentColor" /></button>
        <button className="w-[11px] font-['Liberation_Serif',serif] text-[16px] leading-4 font-bold" aria-label="글꼴">T</button>
        <button className="w-[10px] text-[15px] leading-4 font-bold" aria-label="도움말">?</button>
        <span className="mx-[3px] h-[14px] w-px bg-[#8090a8]" />
        <button aria-label="최소화"><svg width="12" height="13" stroke="currentColor"><path d="M1 10h10" strokeWidth="2" /></svg></button>
        <button aria-label="이전 크기"><svg width="12" height="13" fill="none" stroke="currentColor"><path d="M3.500 5V2.500h7v5H8M1.500 5.500h7v5h-7z" /><path d="M3 3h8M1 6h8" strokeWidth="2" /></svg></button>
        <button aria-label="닫기"><X size={13} strokeWidth={1.500} /></button>
      </div>
    </header>
  );
}

function Toolbar() {
  return (
    <div className="flex h-5 items-center gap-px text-[13px] leading-[18px]">
      <Group className="w-5"><ToolButton label="패널" className="w-[18px]"><svg width="13" height="13" fill="none" stroke="#333"><path d="M5.500 1.500h7v10h-7zM5 4h8" /><path d="M0 2v9l4-4.500z" fill="#333" /></svg></ToolButton></Group>
      <Group className="w-8"><span className="w-[18px] bg-white text-center text-[#777]">주</span><ToolButton label="주기 선택" className="w-3"><Caret /></ToolButton></Group>
      <Group className="mr-px w-[19px]"><ToolButton className="w-[17px]">전</ToolButton></Group>
      <Group className="w-[68px]">
        <input aria-label="종목코드" defaultValue="469750" className="h-full w-[54px] bg-white pl-[3px] text-[12px] outline-none" />
        <ToolButton label="종목 목록" className="w-3"><Caret /></ToolButton>
      </Group>
      <Group className="w-[19px]"><ToolButton label="검색" className="w-[17px]"><Search size={13} color="#666" /></ToolButton></Group>
      <Group className="mr-px w-[29px]"><ToolButton label="소리" className="w-[18px]"><Volume2 size={13} color="#555" fill="#555" /></ToolButton><ToolButton label="소리 메뉴" className="w-[9px]"><Caret /></ToolButton></Group>
      <div className="flex h-5 w-[81px] shrink-0 items-center border border-[#ccc] bg-white text-[#800040]">
        <span className="flex h-5 w-[18px] shrink-0 items-center justify-center border-2 border-[#a04a10] bg-[#0a6a60] text-[12px] text-white">신</span>
        <span className="whitespace-nowrap">아이비젼웍</span>
      </div>
      <Group className="w-[77px]">{["일", "주", "월", "년"].map((t) => <ToolButton key={t}>{t}</ToolButton>)}</Group>
      <Group className="w-[58px]">{["분", "초", "틱"].map((t) => <ToolButton key={t} on={t === "초"}>{t}</ToolButton>)}</Group>
      <Group className="w-[153px]">
        {["1", "5", "10", "60"].map((t) => <ToolButton key={t} on={t === "5"} className="w-[18px] text-[12px]">{t}</ToolButton>)}
        {["180", "300", "600"].map((t) => <ToolButton key={t} className="w-[19px] text-[10px]">{t}</ToolButton>)}
        <ToolButton className="w-[22px] text-[9px]">3600</ToolButton>
      </Group>
      <Group className="w-[39px]"><span className="h-full w-[25px] bg-white text-center text-[12px]">5</span><ToolButton label="간격 선택" className="w-3"><Caret /></ToolButton></Group>
      <Group className="w-[31px]"><input aria-label="봉 개수" defaultValue="4262" className="h-full w-full bg-white text-center text-[12px] outline-none" /></Group>
      <span className="w-[33px] text-[12px] text-[#444]">/6301</span>
      <Group className="w-[77px]">
        <ToolButton label="봉 추가"><svg width="16" height="15"><path d="M1 3h5v6H1z" fill="#444" /><path d="M3.500 1v11M9.500 1v10" stroke="#444" /><path d="M7 3h5v5H7z" fill="#999" /><path d="M9 11.500h6M12 8.500v6" stroke="#444" strokeWidth="2" /></svg></ToolButton>
        <ToolButton label="지표 추가"><svg width="16" height="15" fill="none" stroke="#777"><path d="M0 6l4-4 5 4 5-4M0 3l3 3 4-4 5 4" /><path d="M8 11.500h6M11 8.500v6" stroke="#444" strokeWidth="2" /></svg></ToolButton>
        <ToolButton label="저장"><Save size={16} color="#555" /></ToolButton>
        <ToolButton label="설정"><Settings size={14} color="#777" strokeWidth={3} /></ToolButton>
      </Group>
      <label className="flex items-center gap-[3px] text-[12px]">
        <input type="checkbox" className="ml-px h-[13px] w-[13px] appearance-none border border-[#999] bg-white" />D
      </label>
    </div>
  );
}

function QuoteRow() {
  return (
    <div className="mt-[3px] flex h-5 items-center gap-[2px] text-[12px]">
      <div className="flex h-5 w-[750px] items-center border border-[#888] bg-[#f0f0f0] text-right">
        <div className="flex h-full w-[172px] items-center border-r border-[#bbb] text-[#e81c0c]">
          <span className="w-[59px]">1,841</span>
          <svg width="11" height="10" className="ml-1" fill="currentColor"><path d="M5.500 0L11 10H0z" /></svg>
          <span className="w-[48px]">96</span>
          <span className="w-[48px]">+5.50%</span>
        </div>
        <div className="flex h-full w-[171px] items-center border-r border-[#bbb]">
          <span className="w-[70px]">44,005,427</span>
          <span className="w-[57px] text-[#e81c0c]">116.64%</span>
          <span className="w-[42px]">29.44%</span>
        </div>
        <span className="h-full w-[82px] border-r border-[#bbb] pr-[2px] leading-[18px]">84,886백만</span>
        <div className="flex h-full w-[140px] items-center border-r border-[#bbb] text-[#e81c0c]">
          <span className="w-[37px] text-black">최우선</span><span className="w-[43px]">1,842</span><span className="w-[50px]">1,841</span>
        </div>
        <span className="w-[13px]">시</span><span className="w-[40px] text-[#e81c0c]">1,794</span>
        <span className="w-[22px]">고</span><span className="w-[39px] text-[#e81c0c]">2,100</span>
        <span className="w-[22px]">저</span><span className="w-[39px] text-[#e81c0c]">1,763</span>
      </div>
      <button className="h-5 w-10 border border-[#999] bg-[#f4d0cc] text-[13px] leading-[18px]">매수</button>
      <button className="h-5 w-10 border border-[#999] bg-[#c8def4] text-[13px] leading-[18px]">매도</button>
    </div>
  );
}

function TimeAxis() {
  return (
    <div className="relative col-span-3 flex border-t border-[#909090] bg-white text-[12px] leading-4 text-[#444]">
      <div className="w-[41px] shrink-0" />
      <div className="grid min-w-0 flex-1" style={{ gridTemplateColumns: TIME_COLUMNS }}>
        {TIMES.map(([t], i) => (
          <span key={i} className={`border-l border-[#909090] pl-[2px] ${i === 0 ? "font-bold" : ""}`}>{t}</span>
        ))}
      </div>
      <span className="w-[47px] shrink-0 border-l border-[#909090] pl-[7px] whitespace-nowrap">15:30:0</span>
      <span className="absolute top-[-1px] right-[131px] h-[19px] w-[136px] border-2 border-black bg-[#fddc6c] text-center leading-[15px] whitespace-nowrap">2025/09/18(목) 14:52:25</span>
    </div>
  );
}

const STEP = "flex h-[18px] w-4 shrink-0 items-center justify-center border border-t-white border-r-[#707070] border-b-[#707070] border-l-white bg-[#f0f0f0]";

const TOOL_ICONS: [string, string][] = [
  ["새 창", "M1 1h8v10H1zM7 7h8v8H7zM11 7v8M7 11h8"],
  ["겹치기", "M1 1h8v8H1zM5 5h9v9H5z"],
  ["분석", "M1 12l4-5 3 3 6-6M1 2h2M5 2h2M9 2h2M1 15h2M5 15h2M9 15h2"],
  ["십자선", "M1 3h14M4 1v14M6 5l8 8M6 5v5M6 5h5"],
  ["추세선", "M1 4h14M1 12l4-5 3 3 4-6"],
  ["수직선", "M5 1v14M1 12l4-5 4 3 5-2"],
  ["각도선", "M1 13L13 1M1 13l6-6 3 5 4-2"],
  ["지우기", "M1 9l6-6h5l-5 8H2zM9 15v-4M11 15v-4M14 15v-4"],
  ["창 정렬", "M4 1h11v8H4zM1 6h10v9H1zM2 12l3-3 2 2 3-3"],
];

function BottomBar() {
  return (
    <div className="flex h-[18px] items-center">
      <button aria-label="왼쪽으로" className={STEP}><svg width="6" height="8"><path d="M5 0v8L1 4z" /></svg></button>
      <div className="flex h-[18px] flex-1 bg-[#f7f7f7]">
        <div className="ml-auto h-[18px] w-[67.6%] border border-t-white border-r-[#707070] border-b-[#707070] border-l-white bg-[#f0f0f0]" />
      </div>
      <div className="flex gap-px">
        <button aria-label="재생" className={STEP}><svg width="6" height="10"><path d="M1 0v10l4-5z" /></svg></button>
        <button aria-label="뒤로" className={STEP}><svg width="10" height="10"><path d="M5 0v10L0 5zM10 0v10L5 5z" /></svg></button>
        <button aria-label="정지" className={STEP}><svg width="8" height="8"><path d="M0 0h7v8H0z" /></svg></button>
        <button aria-label="앞으로" className={STEP}><svg width="10" height="10"><path d="M0 0v10l5-5zM5 0v10l5-5z" /></svg></button>
      </div>
      <svg width="72" height="18" className="mr-[5px] ml-[5px]" stroke="#777" shapeRendering="crispEdges" aria-hidden="true">
        <path d="M2 5.500h68" strokeWidth="2" />
        <path d="M46 2h4v8h-4z" fill="#ddd" />
        <path d="M3 15.500h67" stroke="#000" strokeWidth="3" strokeDasharray="1 6" />
      </svg>
      <div className="flex items-center gap-px text-[#777]">
        {TOOL_ICONS.map(([n, d]) => (
          <button key={n} aria-label={n} className={n === "십자선" ? "w-4 bg-white" : "w-4"}><svg width="16" height="16" fill="none" stroke="currentColor"><path d={d} /></svg></button>
        ))}
        <button aria-label="확대경" className="w-4"><Search size={15} /></button>
        <button aria-label="축소" className="w-4"><Minus size={14} strokeWidth={3} color="#555" /></button>
        <button aria-label="확대" className="w-4"><Plus size={14} strokeWidth={3} color="#555" /></button>
        <button className="w-4 text-[14px] leading-4 font-bold text-[#555]" aria-label="자동">A</button>
      </div>
    </div>
  );
}

export default function App() {
  return (
    <div className="flex h-screen flex-col bg-black px-px pt-px pb-[3px] font-['Liberation_Sans','Noto_Sans_CJK_KR',sans-serif]">
      <TitleBar />
      <main className="mr-[2px] ml-[2px] flex min-h-0 flex-1 flex-col bg-[#d0d0d0] pt-[5px] pr-[3px] pl-[3px]">
        <Toolbar />
        <QuoteRow />
        <section className="mt-[3px] grid min-h-0 flex-1 grid-cols-[41px_1fr_47px] grid-rows-[1fr_144px_18px] border border-[#909090] bg-white">
          <LeftAxis />
          <div className="relative min-h-0 border-l border-[#909090]">
            <MainPlot />
            <div className="absolute top-0 left-[3px] flex items-center gap-[3px] text-[13px] leading-4 text-[#333]">
              <span className="h-[6px] w-[5px] border border-[#777] bg-[#bbb]" />
              <span className="border border-[#bbb] bg-[#f0f0f0] px-[3px]">아이비젼웍스 매물대 수(13)</span>
            </div>
          </div>
          <div className="min-h-0 border-l border-[#909090]"><RightAxis /></div>
          <div className="border-t border-[#909090]"><SubAxis side="left" /></div>
          <div className="border-t border-l border-[#909090]"><SubPlot /></div>
          <div className="border-t border-l border-[#909090]"><SubAxis side="right" /></div>
          <TimeAxis />
        </section>
        <div className="-mx-[3px] bg-[#f0f0f0] px-[3px] pb-[2px]"><BottomBar /></div>
      </main>
    </div>
  );
}
